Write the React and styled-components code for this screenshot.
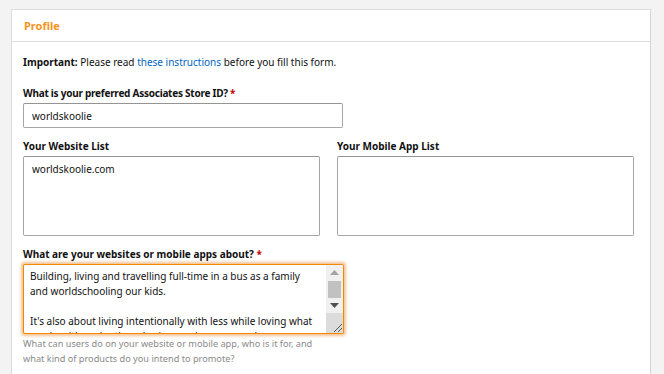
import React from 'react';
import styled, { createGlobalStyle } from 'styled-components';

const orange = '#f08804';
const link = '#0066c0';
const font = `"Noto Sans", "Open Sans", Arial, sans-serif`;

const GlobalStyle = createGlobalStyle`
  html, body {
    margin: 0;
    padding: 0;
    background: #f3f3f3;
    font-family: ${font};
    color: #111;
    overflow: hidden;
  }
`;

const Page = styled.div`
  padding: 9px 0 0 11px;
  height: 374px;
  box-sizing: border-box;
`;

const Card = styled.section`
  width: 640px;
  height: 365px;
  box-sizing: border-box;
  background: #fff;
  border: 1px solid #ddd;
  border-bottom: none;
  border-right-color: #d5d5d5;
`;

const CardHeader = styled.header`
  height: 31px;
  border-bottom: 1px solid #ddd;
  display: flex;
  align-items: center;
  padding-left: 12px;
  color: #f7941d;
  font-weight: 700;
  font-size: 11px;
`;

const CardBody = styled.div`
  padding: 13px 15px 0 11px;
  font-size: 10px;
`;

const Notice = styled.p`
  margin: 0 0 17px;
  line-height: 14px;
  font-size: 10px;
  b { font-weight: 700; }
  a { color: ${link}; text-decoration: none; }
`;

const Field = styled.div`
  margin-bottom: ${p => p.gap || 11}px;
`;

const Label = styled.label`
  display: block;
  font-weight: 700;
  font-size: 10px;
  line-height: 14px;
  margin-bottom: 3px;
  letter-spacing: ${p => p.tight ? '-0.25px' : '0'};
  span { color: #c40000; }
`;

const TextInput = styled.input`
  display: block;
  width: 320px;
  height: 25px;
  box-sizing: border-box;
  border: 1px solid #a6a6a6;
  border-top-color: #949494;
  border-radius: 2px;
  padding: 0 8px;
  font-family: ${font};
  font-size: 10px;
  color: #111;
  outline: none;
`;

const Columns = styled.div`
  display: grid;
  grid-template-columns: 297px 297px;
  column-gap: 17px;
`;

const Area = styled.textarea`
  display: block;
  width: ${p => p.w}px;
  height: ${p => p.h}px;
  box-sizing: border-box;
  border: 1px solid #a6a6a6;
  border-top-color: #949494;
  border-radius: 2px;
  padding: 5px 8px;
  font-family: ${font};
  font-size: 10px;
  line-height: 15px;
  color: #111;
  resize: none;
  outline: none;
  overflow: hidden;
`;

const FocusWrap = styled.div`
  position: relative;
  width: 321px;
`;

const FocusArea = styled(Area)`
  border: 1px solid ${orange};
  box-shadow: 0 0 3px 2px rgba(228, 121, 17, 0.45);
  padding: 4px 25px 0 6px;
`;

// drawn scrollbar: the headless browser hides native ones
const Scrollbar = styled.div`
  position: absolute;
  top: 1px;
  right: 1px;
  bottom: 1px;
  width: 17px;
  display: flex;
  flex-direction: column;
  background: #f0f0f0;
`;

const ScrollButton = styled.div`
  height: 16px;
  display: flex;
  align-items: center;
  justify-content: center;
`;

const Track = styled.div`
  flex: 1;
  padding: 0 2px;
  display: flex;
  flex-direction: column;
`;

const Thumb = styled.div`
  height: 17px;
  background: #c1c1c1;
`;

const Resizer = styled.div`
  height: 20px;
  background: #dcdcdc;
  display: flex;
  align-items: flex-end;
  justify-content: flex-end;
`;

const Help = styled.p`
  margin: 2px 0 0;
  color: #8a8a8a;
  font-size: 9.2px;
  line-height: 15px;
  width: 300px;
`;

const aboutText = `Building, living and travelling full-time in a bus as a family and worldschooling our kids.

It's also about living intentionally with less while loving what we do with each other, sharing our journey, our bus conversion and the places we explore along the way.`;

export default function App() {
  return (
    <Page>
      <GlobalStyle />
      <Card>
        <CardHeader>Profile</CardHeader>
        <CardBody>
          <Notice>
            <b>Important:</b> Please read <a href="#">these instructions</a> before you fill this form.
          </Notice>
          <Field>
            <Label tight>What is your preferred Associates Store ID? <span>*</span></Label>
            <TextInput defaultValue="worldskoolie" />
          </Field>
          <Columns>
            <Field>
              <Label>Your Website List</Label>
              <Area w={297} h={80} defaultValue="worldskoolie.com" />
            </Field>
            <Field>
              <Label>Your Mobile App List</Label>
              <Area w={297} h={80} defaultValue="" />
            </Field>
          </Columns>
          <Field>
            <Label>What are your websites or mobile apps about? <span>*</span></Label>
            <FocusWrap>
              <FocusArea w={321} h={70} defaultValue={aboutText} />
              <Scrollbar>
                <ScrollButton>
                  <svg width="9" height="5" viewBox="0 0 9 5"><path d="M0 5h9L4.5 0z" fill="#a3a3a3" /></svg>
                </ScrollButton>
                <Track>
                  <Thumb />
                </Track>
                <ScrollButton>
                  <svg width="9" height="5" viewBox="0 0 9 5"><path d="M0 0h9L4.5 5z" fill="#505050" /></svg>
                </ScrollButton>
                <Resizer>
                  <svg width="12" height="12" viewBox="0 0 12 12">
                    <path d="M11 3L3 11M11 7L7 11" stroke="#555" strokeWidth="1" />
                  </svg>
                </Resizer>
              </Scrollbar>
            </FocusWrap>
            <Help>
              What can users do on your website or mobile app, who is it for, and what kind of products do you intend to promote?
            </Help>
          </Field>
        </CardBody>
      </Card>
    </Page>
  );
}
